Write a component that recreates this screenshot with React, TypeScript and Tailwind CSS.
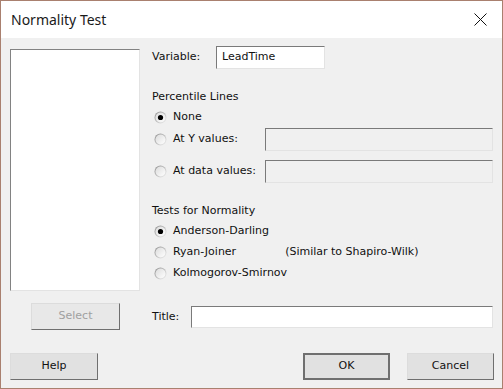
import React from "react";

function Radio({ checked }: { checked?: boolean }) {
  return (
    <svg width="13" height="13" viewBox="0 0 13 13" className="shrink-0">
      <defs>
        <linearGradient id="rb" x1="0" y1="0" x2="1" y2="1">
          <stop offset="0" stopColor="#8a8a8a" />
          <stop offset="1" stopColor="#f4f4f4" />
        </linearGradient>
        <linearGradient id="rf" x1="0" y1="0" x2="1" y2="1">
          <stop offset="0" stopColor="#dcdcdc" />
          <stop offset="1" stopColor="#ffffff" />
        </linearGradient>
      </defs>
      <circle cx="6.5" cy="6.5" r="6" fill="url(#rb)" />
      <circle cx="6.5" cy="6.5" r="5" fill="url(#rf)" />
      {checked && <circle cx="6.5" cy="6.5" r="2.6" fill="#000" />}
    </svg>
  );
}

function RadioRow({
  label,
  checked,
  children,
}: {
  label: string;
  checked?: boolean;
  children?: React.ReactNode;
}) {
  return (
    <div className="flex items-center">
      <div className="ml-[2px]">
        <Radio checked={checked} />
      </div>
      <span className="ml-[6px]">{label}</span>
      {children}
    </div>
  );
}

function Sunken({ className, value }: { className: string; value?: string }) {
  return (
    <div
      className={
        "border border-t-[#7a7a7a] border-l-[#7a7a7a] border-r-[#e3e3e3] border-b-[#e3e3e3] flex items-center pl-[5px] " +
        className
      }
    >
      {value}
    </div>
  );
}

function Button({
  label,
  className,
  disabled,
  primary,
}: {
  label: string;
  className?: string;
  disabled?: boolean;
  primary?: boolean;
}) {
  return (
    <div
      className={
        "h-[27px] flex items-center justify-center bg-[#e1e1e1] " +
        (primary
          ? "border-2 border-[#6f6f6f] "
          : "border border-t-[#dcdcdc] border-l-[#dcdcdc] border-r-[#6f6f6f] border-b-[#6f6f6f] ") +
        (disabled ? "text-[#a0a0a0] bg-[#e8e8e8] " : "") +
        (className ?? "")
      }
    >
      {label}
    </div>
  );
}

export default function App() {
  return (
    <div
      className="w-[503px] h-[389px] border border-[#a9806f] flex flex-col text-[#111] text-[11px]"
      style={{ fontFamily: '"DejaVu Sans", Verdana, sans-serif' }}
    >
      <div className="h-[37px] bg-white flex items-center justify-between pl-[10px] pr-[15px] shrink-0">
        <span
          className="text-[14px] text-[#1a1a1a]"
          style={{ fontFamily: '"Noto Sans", "Open Sans", sans-serif' }}
        >
          Normality Test
        </span>
        <svg width="13" height="13" viewBox="0 0 13 13">
          <path d="M0.5 0.5 L12.5 12.5 M12.5 0.5 L0.5 12.5" stroke="#111" strokeWidth="1" />
        </svg>
      </div>

      <div className="flex-1 bg-[#f0f0f0] flex flex-col pl-[9px] pr-[9px] pb-[8px]">
        <div className="flex">
          <div className="w-[130px] flex flex-col">
            <div className="mt-[11px] h-[242px] bg-white border border-t-[#828282] border-l-[#828282] border-r-[#e3e3e3] border-b-[#e3e3e3]" />
            <Button label="Select" disabled className="mt-[12px] ml-[21px] w-[89px]" />
          </div>

          <div className="ml-[12px] flex-1 flex flex-col">
            <div className="mt-[8px] h-[23px] flex items-center">
              <span className="w-[64px]">Variable:</span>
              <Sunken className="w-[109px] h-[23px] bg-white" value="LeadTime" />
            </div>

            <div className="mt-[18px] h-[20px] flex items-center">Percentile Lines</div>
            <div className="h-[20px] flex items-center">
              <RadioRow label="None" checked />
            </div>
            <div className="mt-[1px] h-[23px] flex items-center justify-between">
              <RadioRow label="At Y values:" />
              <Sunken className="w-[228px] h-[23px] bg-[#f0f0f0]" />
            </div>
            <div className="mt-[9px] h-[23px] flex items-center justify-between">
              <RadioRow label="At data values:" />
              <Sunken className="w-[228px] h-[23px] bg-[#f0f0f0]" />
            </div>

            <div className="mt-[18px] h-[20px] flex items-center">Tests for Normality</div>
            <div className="h-[20px] flex items-center">
              <RadioRow label="Anderson-Darling" checked />
            </div>
            <div className="mt-[1px] h-[20px] flex items-center">
              <RadioRow label="Ryan-Joiner">
                <span className="ml-[49px]">(Similar to Shapiro-Wilk)</span>
              </RadioRow>
            </div>
            <div className="mt-[1px] h-[20px] flex items-center">
              <RadioRow label="Kolmogorov-Smirnov" />
            </div>

            <div className="mt-[23px] h-[22px] flex items-center">
              <span className="w-[39px]">Title:</span>
              <Sunken className="flex-1 h-[22px] bg-white" />
            </div>
          </div>
        </div>

        <div className="mt-auto flex items-center">
          <Button label="Help" className="w-[88px]" />
          <Button label="OK" primary className="ml-auto w-[87px]" />
          <Button label="Cancel" className="ml-[17px] w-[87px] -mr-[1px]" />
        </div>
      </div>
    </div>
  );
}
